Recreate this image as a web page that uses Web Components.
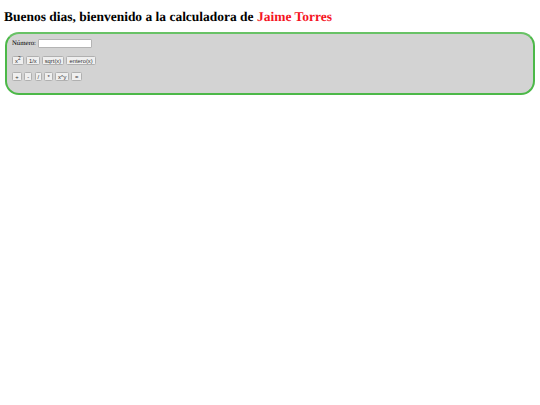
<!DOCTYPE html>
<html lang="es">
<head>
<meta charset="utf-8">
<title>Calculadora</title>
<style>
	html, body { background: #fff; }
	body { margin: 0; padding: 9px 5px 0 4px; font-family: "Liberation Serif", "Times New Roman", serif; color: #000; text-rendering: geometricPrecision; }
</style>
</head>
<body>
<calc-greeting>Jaime Torres</calc-greeting>
<calc-panel>
	<calc-number-row></calc-number-row>
	<calc-button-row>
		<calc-button style="--w:11.5px"><span>x<sup style="font-size:.8em;line-height:0">2</sup></span></calc-button>
		<calc-button style="--w:14px">1/x</calc-button>
		<calc-button style="--w:21.7px">sqrt(x)</calc-button>
		<calc-button style="--w:30px">entero(x)</calc-button>
	</calc-button-row>
	<calc-button-row>
		<calc-button style="--w:10px">+</calc-button>
		<calc-button style="--w:8px">-</calc-button>
		<calc-button style="--w:7.5px">/</calc-button>
		<calc-button style="--w:8.5px">*</calc-button>
		<calc-button style="--w:14px">x^y</calc-button>
		<calc-button style="--w:10.5px">=</calc-button>
	</calc-button-row>
</calc-panel>
<script>
const greetingTemplate = document.createElement('template')
greetingTemplate.innerHTML = `
	<style>
		:host { display: block; }
		h2 { margin: 0; font-size: 13.47px; line-height: 15px; font-weight: bold; white-space: nowrap; }
		span { color: #f5141f; }
	</style>
	<h2>Buenos dias, bienvenido a la calculadora de <span><slot></slot></span></h2>
`

const panelTemplate = document.createElement('template')
panelTemplate.innerHTML = `
	<style>
		:host {
			display: block;
			box-sizing: border-box;
			width: 530px;
			height: 63px;
			margin: 8px 0 0 1px;
			padding: 5px 5px 0 5px;
			background: #d3d3d3;
			border: 2px solid #4cb848;
			border-top-color: #68c266;
			border-radius: 14px;
		}
	</style>
	<slot></slot>
`

const numberRowTemplate = document.createElement('template')
numberRowTemplate.innerHTML = `
	<style>
		:host {
			display: flex;
			align-items: center;
			gap: 2px;
			height: 9px;
			font-size: 6.75px;
			color: #000;
		}
		input {
			box-sizing: border-box;
			width: 53.5px;
			height: 9px;
			margin: 0;
			padding: 0;
			background: #fff;
			border: 1px solid #b4b4b4;
			border-radius: 1px;
		}
	</style>
	<span>Número:</span><input type="text">
`

const buttonRowTemplate = document.createElement('template')
buttonRowTemplate.innerHTML = `
	<style>
		:host { display: flex; gap: 2.3px; margin-top: 7.5px; }
	</style>
	<slot></slot>
`

const buttonTemplate = document.createElement('template')
buttonTemplate.innerHTML = `
	<style>
		:host { display: block; }
		button {
			box-sizing: border-box;
			display: block;
			width: var(--w, auto);
			height: 9px;
			margin: 0;
			padding: 1px 0 0;
			font: 5.8px/7px "Liberation Sans", Arial, sans-serif;
			color: #333;
			background: #efefef;
			border: 1px solid #b0b0b0;
			border-radius: 1.5px;
			text-rendering: auto;
		}
		::slotted(*) { font-family: "Liberation Sans", Arial, sans-serif; }
	</style>
	<button><slot></slot></button>
`

class CalcGreeting extends HTMLElement {
	constructor() {
		super()
		this.attachShadow({ mode: 'open' })
		this.shadowRoot.appendChild(greetingTemplate.content.cloneNode(true))
	}
}

class CalcPanel extends HTMLElement {
	constructor() {
		super()
		this.attachShadow({ mode: 'open' })
		this.shadowRoot.appendChild(panelTemplate.content.cloneNode(true))
	}
}

class CalcNumberRow extends HTMLElement {
	constructor() {
		super()
		this.attachShadow({ mode: 'open' })
		this.shadowRoot.appendChild(numberRowTemplate.content.cloneNode(true))
	}
}

class CalcButtonRow extends HTMLElement {
	constructor() {
		super()
		this.attachShadow({ mode: 'open' })
		this.shadowRoot.appendChild(buttonRowTemplate.content.cloneNode(true))
	}
}

class CalcButton extends HTMLElement {
	constructor() {
		super()
		this.attachShadow({ mode: 'open' })
		this.shadowRoot.appendChild(buttonTemplate.content.cloneNode(true))
	}
}

window.customElements.define('calc-greeting', CalcGreeting)
window.customElements.define('calc-panel', CalcPanel)
window.customElements.define('calc-number-row', CalcNumberRow)
window.customElements.define('calc-button-row', CalcButtonRow)
window.customElements.define('calc-button', CalcButton)
</script>
</body>
</html>
